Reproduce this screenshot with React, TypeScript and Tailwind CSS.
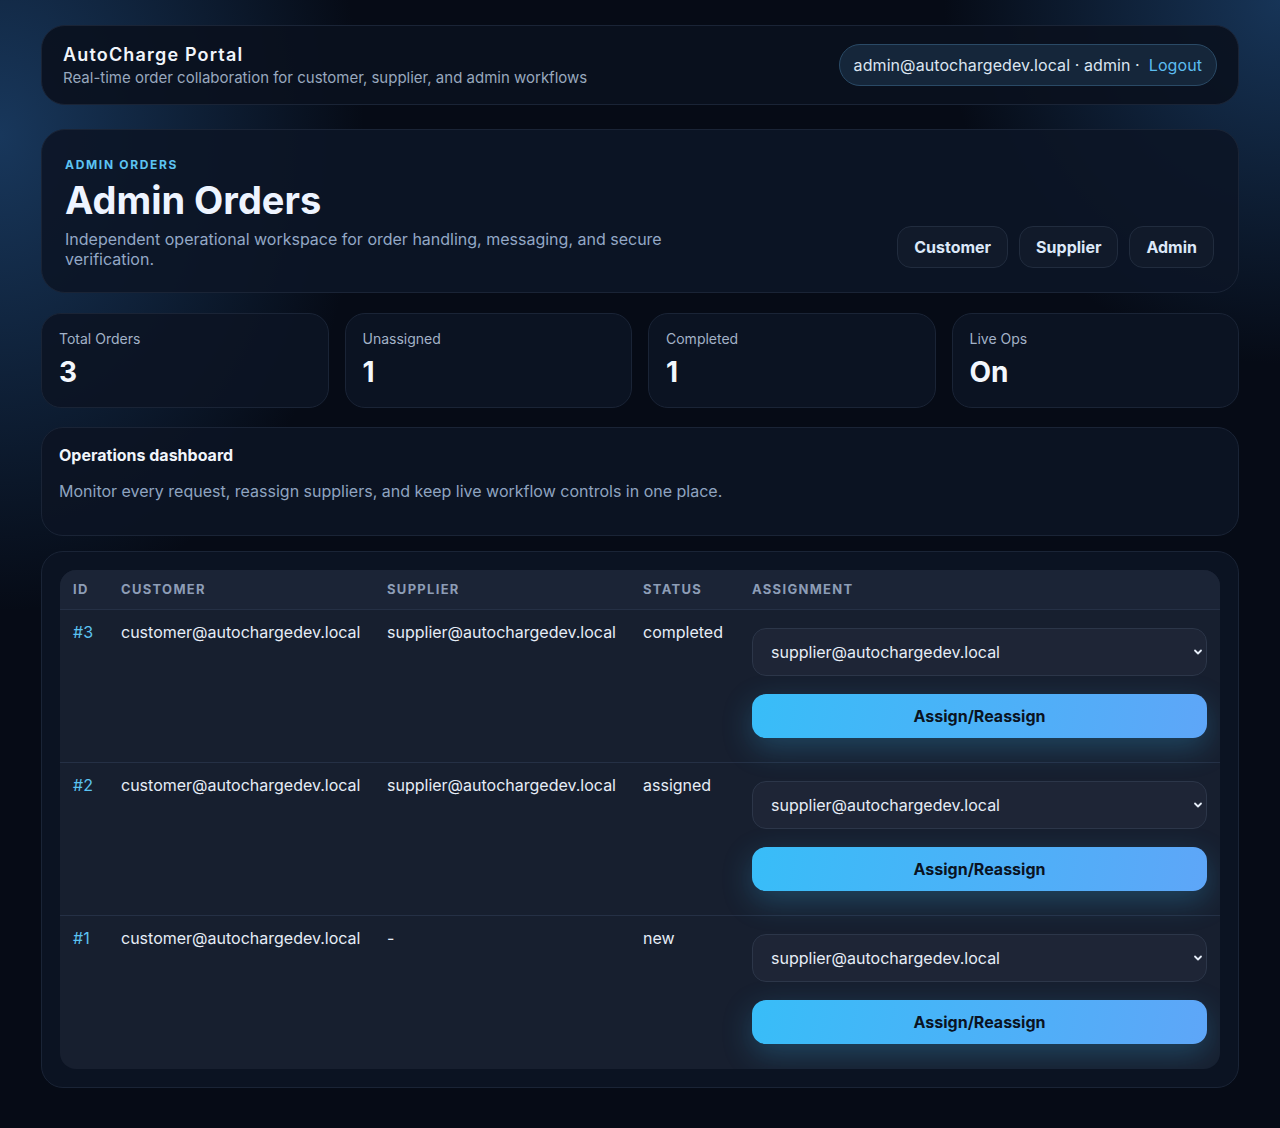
import React from "react";

type Order = {
  id: number;
  customer: string;
  supplier: string;
  status: string;
};

const orders: Order[] = [
  { id: 3, customer: "customer@autochargedev.local", supplier: "supplier@autochargedev.local", status: "completed" },
  { id: 2, customer: "customer@autochargedev.local", supplier: "supplier@autochargedev.local", status: "assigned" },
  { id: 1, customer: "customer@autochargedev.local", supplier: "-", status: "new" },
];

const stats = [
  { label: "Total Orders", value: "3" },
  { label: "Unassigned", value: "1" },
  { label: "Completed", value: "1" },
  { label: "Live Ops", value: "On" },
];

function Chevron() {
  return (
    <svg width="10" height="10" viewBox="0 0 10 10" className="pointer-events-none absolute right-[4px] top-1/2 -translate-y-1/2">
      <path d="M2 3.5 L5 6.5 L8 3.5" fill="none" stroke="#e5edf8" strokeWidth="1.8" strokeLinecap="round" strokeLinejoin="round" />
    </svg>
  );
}

function OrderRow({ order, last }: { order: Order; last: boolean }) {
  return (
    <div
      className={`grid grid-cols-[48px_266px_256px_109px_1fr] text-[16px] text-[#e6edf7] ${
        last ? "" : "border-b border-[#253045]"
      }`}
    >
      <div className="pl-[13px] pt-[10px] leading-6 text-[#5cc3f2]">#{order.id}</div>
      <div className="pl-[13px] pt-[10px] leading-6">{order.customer}</div>
      <div className="pl-[13px] pt-[10px] leading-6">{order.supplier}</div>
      <div className="pl-[13px] pt-[10px] leading-6">{order.status}</div>
      <div className={`flex flex-col gap-[18px] pl-[13px] pr-[13px] pt-[18px] ${last ? "pb-[25px]" : "pb-[24px]"}`}>
        <div className="relative">
          <select
            defaultValue="supplier"
            className="h-[48px] w-full appearance-none rounded-[14px] border border-[#2c3649] bg-[#1e2536] px-[18px] text-[16px] text-[#e6edf7] outline-none"
          >
            <option value="supplier">supplier@autochargedev.local</option>
          </select>
          <Chevron />
        </div>
        <button className="h-[44px] w-full rounded-[14px] bg-[linear-gradient(100deg,#38bdf8,#5ea6f8)] text-[16px] font-bold text-[#0a1322] shadow-[0_10px_30px_rgba(56,189,248,0.25)]">
          Assign/Reassign
        </button>
      </div>
    </div>
  );
}

export default function App() {
  return (
    <div
      className="min-h-screen w-full bg-[#060b16] bg-[radial-gradient(ellipse_520px_680px_at_0%_12%,rgba(30,70,115,0.75),transparent_70%),radial-gradient(ellipse_480px_520px_at_100%_0%,rgba(30,70,115,0.7),transparent_70%)] text-[#e6edf7]"
      style={{ fontFamily: "Inter, 'Noto Sans', sans-serif" }}
    >
      <div className="mx-auto w-[1198px] pt-[25px] pb-[41px]">
        {/* top bar */}
        <header className="flex h-[80px] items-center justify-between rounded-[24px] border border-[#1a2436] bg-[#0a111e]/90 px-[21px]">
          <div>
            <div className="text-[18px] font-semibold leading-6 tracking-[0.065em] text-[#f1f5fb]">AutoCharge Portal</div>
            <div className="mt-[1px] text-[15px] leading-5 text-[#98a8be]">
              Real-time order collaboration for customer, supplier, and admin workflows
            </div>
          </div>
          <div className="flex h-[42px] items-center rounded-full border border-[#2a4a66] bg-[#15263a] px-[14px] text-[16px] tracking-[0.005em] text-[#dbe5f1]">
            <span>admin@autochargedev.local · admin ·</span>
            <button className="ml-[9px] text-[#5cbdf0]">Logout</button>
          </div>
        </header>

        {/* hero */}
        <section className="mt-[24px] flex items-end justify-between rounded-[24px] border border-[#1a2436] bg-[#0c1526]/90 pl-[23px] pr-[24px] pt-[27px] pb-[23px]">
          <div>
            <div className="text-[12px] font-bold leading-4 tracking-[0.14em] text-[#5cc3f2]">ADMIN ORDERS</div>
            <h1 className="mt-[5px] text-[38px] font-bold leading-[44px] text-[#eef4ff]">Admin Orders</h1>
            <p className="mt-[7px] max-w-[620px] text-[16px] leading-5 text-[#93a8c6]">
              Independent operational workspace for order handling, messaging, and secure verification.
            </p>
          </div>
          <div className="mb-[1px] flex gap-[11px]">
            {["Customer", "Supplier", "Admin"].map((r) => (
              <button
                key={r}
                className="h-[42px] rounded-[14px] border border-[#212c3e] bg-[#111a2a] px-[16px] text-[16px] font-bold text-[#dce8f8]"
              >
                {r}
              </button>
            ))}
          </div>
        </section>

        {/* stats */}
        <section className="mt-[20px] grid grid-cols-4 gap-[16px]">
          {stats.map((s) => (
            <div
              key={s.label}
              className="h-[95px] rounded-[20px] border border-[#1a2436] bg-[#0c1424]/90 px-[17px] pt-[15px]"
            >
              <div className="text-[14px] leading-5 text-[#a3b2c7]">{s.label}</div>
              <div className="mt-[7px] text-[28px] font-bold leading-8 text-[#f3f7fd]">{s.value}</div>
            </div>
          ))}
        </section>

        {/* operations */}
        <section className="mt-[19px] h-[109px] rounded-[22px] border border-[#1a2436] bg-[#0c1424]/90 px-[17px] pt-[15px]">
          <div className="text-[16px] font-bold leading-6 text-[#f1f5fb]">Operations dashboard</div>
          <p className="mt-[12px] text-[16px] leading-6 text-[#8fa4c0]">
            Monitor every request, reassign suppliers, and keep live workflow controls in one place.
          </p>
        </section>

        {/* orders table */}
        <section className="mt-[15px] rounded-[22px] border border-[#1a2436] bg-[#0c1424]/90 p-[18px]">
          <div className="overflow-hidden rounded-[16px] bg-[#171f2f]">
            <div className="grid h-[40px] grid-cols-[48px_266px_256px_109px_1fr] items-center border-b border-[#253045] bg-[#1b2436] text-[13px] font-bold tracking-[0.1em] text-[#8d9db6]">
              <div className="pl-[13px]">ID</div>
              <div className="pl-[13px]">CUSTOMER</div>
              <div className="pl-[13px]">SUPPLIER</div>
              <div className="pl-[13px]">STATUS</div>
              <div className="pl-[13px]">ASSIGNMENT</div>
            </div>
            {orders.map((o, i) => (
              <OrderRow key={o.id} order={o} last={i === orders.length - 1} />
            ))}
          </div>
        </section>
      </div>
    </div>
  );
}
